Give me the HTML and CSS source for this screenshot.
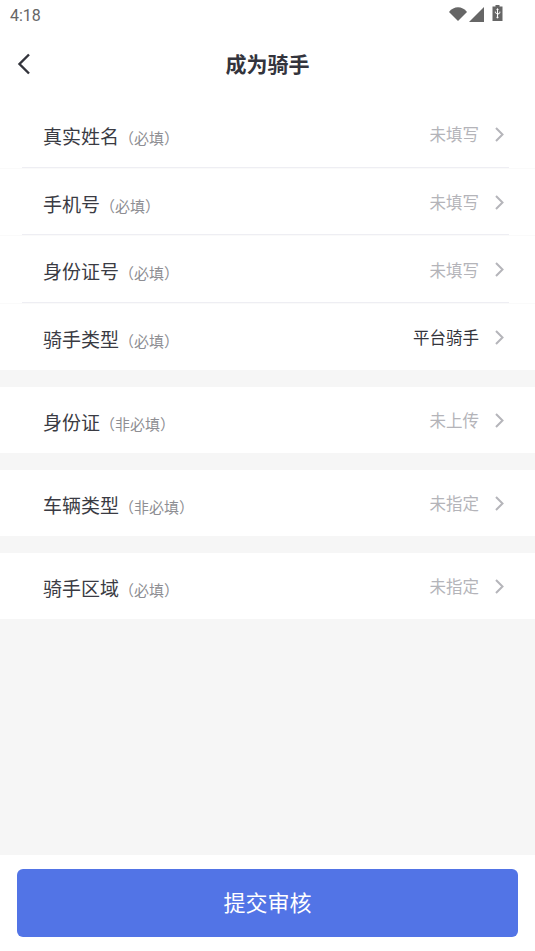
FILE: index.html
```html
<!DOCTYPE html>
<html lang="zh-CN">
<head>
  <meta charset="UTF-8">
  <meta name="viewport" content="width=device-width, initial-scale=1.0">
  <title>成为骑手</title>
  <link rel="stylesheet" href="styles.css">
</head>
<body>
  <div class="page">
    <!-- Status bar -->
    <div class="status-bar">
      <span class="time">4:18</span>
      <div class="status-icons">
        <svg class="wifi" width="18" height="14" viewBox="0 0 18 14"><path d="M0 5 C5 -1.2 13 -1.2 18 5 L9 14 Z" fill="#666"/></svg>
        <svg class="signal" width="15" height="15" viewBox="0 0 15 15"><path d="M15 0 V15 H0 Z" fill="#666"/></svg>
        <svg class="battery" width="11" height="16" viewBox="0 0 11 16"><path d="M3.5 0 H7.5 V1.5 H10.5 V16 H0.5 V1.5 H3.5 Z" fill="#666"/><path d="M5.5 3 L6.8 5 H6 V8.6 L7.5 7.6 V6.5 H8.3 V8.1 L6 9.8 V11.5 A1 1 0 1 1 5 11.5 V9.3 L2.9 7.8 V6.5 H3.7 V7.4 L5 8.2 V5 H4.2 Z" fill="#fff"/></svg>
      </div>
    </div>

    <!-- Title bar -->
    <div class="title-bar">
      <svg class="back" width="14" height="22" viewBox="0 0 14 22"><path d="M12 1.5 L2.5 11 L12 20.5" fill="none" stroke="#33343c" stroke-width="2.4"/></svg>
      <h1>成为骑手</h1>
    </div>

    <div class="content">
      <div class="group">
        <div class="row">
          <div class="label">真实姓名<span class="hint">（必填）</span></div>
          <div class="value">未填写</div>
          <svg class="arrow" width="9" height="15" viewBox="0 0 9 15"><path d="M1 1 L7.5 7.5 L1 14" fill="none" stroke="#b5b5ba" stroke-width="2"/></svg>
        </div>
        <div class="row">
          <div class="label">手机号<span class="hint">（必填）</span></div>
          <div class="value">未填写</div>
          <svg class="arrow" width="9" height="15" viewBox="0 0 9 15"><path d="M1 1 L7.5 7.5 L1 14" fill="none" stroke="#b5b5ba" stroke-width="2"/></svg>
        </div>
        <div class="row">
          <div class="label">身份证号<span class="hint">（必填）</span></div>
          <div class="value">未填写</div>
          <svg class="arrow" width="9" height="15" viewBox="0 0 9 15"><path d="M1 1 L7.5 7.5 L1 14" fill="none" stroke="#b5b5ba" stroke-width="2"/></svg>
        </div>
        <div class="row">
          <div class="label">骑手类型<span class="hint">（必填）</span></div>
          <div class="value filled">平台骑手</div>
          <svg class="arrow" width="9" height="15" viewBox="0 0 9 15"><path d="M1 1 L7.5 7.5 L1 14" fill="none" stroke="#b5b5ba" stroke-width="2"/></svg>
        </div>
      </div>

      <div class="group">
        <div class="row">
          <div class="label">身份证<span class="hint">（非必填）</span></div>
          <div class="value">未上传</div>
          <svg class="arrow" width="9" height="15" viewBox="0 0 9 15"><path d="M1 1 L7.5 7.5 L1 14" fill="none" stroke="#b5b5ba" stroke-width="2"/></svg>
        </div>
      </div>

      <div class="group">
        <div class="row">
          <div class="label">车辆类型<span class="hint">（非必填）</span></div>
          <div class="value">未指定</div>
          <svg class="arrow" width="9" height="15" viewBox="0 0 9 15"><path d="M1 1 L7.5 7.5 L1 14" fill="none" stroke="#b5b5ba" stroke-width="2"/></svg>
        </div>
      </div>

      <div class="group">
        <div class="row">
          <div class="label">骑手区域<span class="hint">（必填）</span></div>
          <div class="value">未指定</div>
          <svg class="arrow" width="9" height="15" viewBox="0 0 9 15"><path d="M1 1 L7.5 7.5 L1 14" fill="none" stroke="#b5b5ba" stroke-width="2"/></svg>
        </div>
      </div>
    </div>

    <!-- Submit -->
    <div class="footer">
      <button class="submit" type="button">提交审核</button>
    </div>
  </div>
</body>
</html>
```

FILE: styles.css
```css
body {
  font-family: 'Roboto', 'Noto Sans CJK SC', sans-serif;
  background-color: #f6f6f6;
  color: #33343c;
  margin: 0;
}
.page {
  width: 535px;
  height: 951px;
  display: flex;
  flex-direction: column;
  overflow: hidden;
}
.status-bar {
  height: 30px;
  background: #fff;
  display: flex;
  align-items: center;
  justify-content: space-between;
  padding: 0 32px 0 10px;
  flex-shrink: 0;
}
.time {
  font-size: 16px;
  color: #666;
}
.status-icons {
  display: flex;
  align-items: center;
  gap: 2px;
  margin-top: -2px;
}
.signal {
  margin-right: 6px;
}
.battery {
  margin-top: -2px;
}
.title-bar {
  height: 70px;
  box-sizing: border-box;
  padding-bottom: 5px;
  background: #fff;
  display: flex;
  align-items: center;
  justify-content: center;
  position: relative;
  flex-shrink: 0;
}
.title-bar h1 {
  margin: 0;
  font-size: 21px;
  font-weight: 700;
  color: #33343c;
}
.back {
  position: absolute;
  left: 17px;
  top: 23px;
}
.content {
  flex: 1;
  display: flex;
  flex-direction: column;
  gap: 16.5px;
}
.group {
  background: #fff;
}
.row {
  height: 67.5px;
  box-sizing: border-box;
  display: flex;
  align-items: center;
  padding: 0 31px 0 43px;
  position: relative;
}
.group + .group .row {
  height: 66.5px;
  padding-top: 0;
}
.row + .row {
  border-top: 1px solid #fafafa;
}
.row + .row::before {
  content: '';
  position: absolute;
  left: 22px;
  right: 26px;
  top: -2px;
  height: 1px;
  background: #eeeef3;
}
.label {
  flex: 1;
  font-size: 19px;
  color: #3a3b43;
  padding-top: 3px;
}
.hint {
  font-size: 15px;
  color: #8e8e93;
}
.value {
  font-size: 16.5px;
  color: #b4b4b9;
  margin-right: 16px;
  margin-top: 1px;
}
.value.filled {
  color: #33343c;
}
.arrow {
  margin-top: 1px;
}
.footer {
  height: 96px;
  box-sizing: border-box;
  background: #fff;
  padding: 14px 17px;
  flex-shrink: 0;
}
.submit {
  display: block;
  width: 100%;
  height: 68px;
  padding: 0 0 5px;
  border: none;
  border-radius: 6px;
  background-color: #5274e6;
  color: #fff;
  font-family: inherit;
  font-size: 22px;
}
```
